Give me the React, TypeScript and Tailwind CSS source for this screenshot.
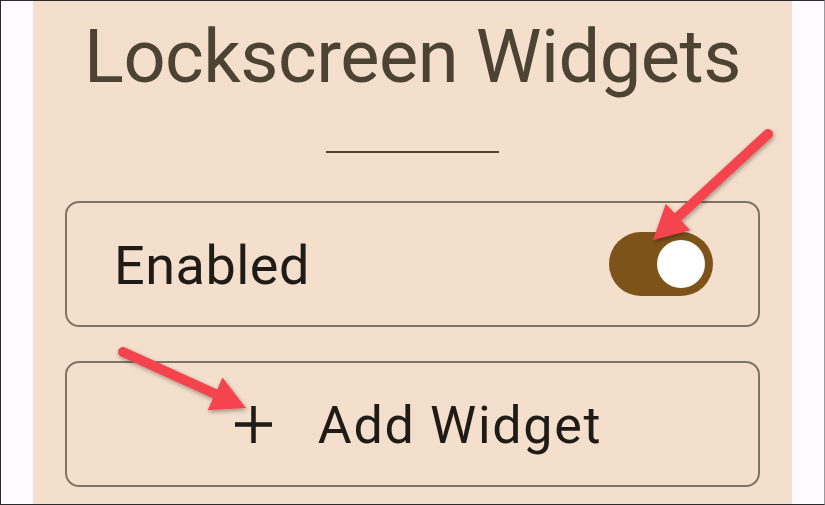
function Arrow({ x1, y1, x2, y2 }: { x1: number; y1: number; x2: number; y2: number }) {
  // shaft from tail to the base of the head, head as a triangle
  const dx = x2 - x1;
  const dy = y2 - y1;
  const len = Math.hypot(dx, dy);
  const ux = dx / len;
  const uy = dy / len;
  const headLen = 34;
  const half = 18;
  const bx = x2 - ux * headLen;
  const by = y2 - uy * headLen;
  const p1 = `${bx - uy * half},${by + ux * half}`;
  const p2 = `${bx + uy * half},${by - ux * half}`;
  return (
    <g filter="url(#arrowShadow)">
      <line
        x1={x1}
        y1={y1}
        x2={bx + ux * 4}
        y2={by + uy * 4}
        stroke="#f44450"
        strokeWidth={10}
        strokeLinecap="round"
      />
      <polygon points={`${x2},${y2} ${p1} ${p2}`} fill="#f44450" strokeLinejoin="round" />
    </g>
  );
}

function Toggle() {
  return (
    <div className="flex h-[64px] w-[104px] items-center justify-end rounded-full bg-[#7e5319] pr-[8px]">
      <div className="h-[48px] w-[48px] rounded-full bg-white" />
    </div>
  );
}

function PlusIcon() {
  return (
    <svg width={37} height={37} viewBox="0 0 37 37" className="shrink-0">
      <path d="M18.5 0 V37 M0 18.5 H37" stroke="#1f1b16" strokeWidth={4.5} />
    </svg>
  );
}

export default function App() {
  return (
    <div
      className="relative flex h-[505px] w-[825px] overflow-hidden border border-[#2a2a2a] border-r-[#9a9a9a] bg-[#fdfbff]"
      style={{ fontFamily: 'Roboto, "Liberation Sans", sans-serif' }}
    >
      <div className="w-[32px] shrink-0" />
      <main className="flex w-[759px] shrink-0 flex-col items-center bg-[#f3dfcb] px-8 pt-[19px]">
        <h1 className="text-[74px] leading-[74px] tracking-[-0.5px] text-[#4d4333]">Lockscreen Widgets</h1>
        <div className="mt-[57px] h-[2px] w-[173px] bg-[#4d4333]" />

        <div className="mt-[48px] flex h-[126px] w-full items-center justify-between rounded-[14px] border-2 border-[#7f7464] pl-[47px] pr-[45px]">
          <span className="mt-[4px] text-[54px] leading-none tracking-[0.5px] text-[#1f1b16]">Enabled</span>
          <Toggle />
        </div>

        <button className="mt-[34px] flex h-[126px] w-full items-center justify-center gap-[46px] rounded-[14px] border-2 border-[#7f7464] pl-[12px] text-[#1f1b16]">
          <PlusIcon />
          <span className="mt-[4px] text-[52px] leading-none tracking-[1.7px]">Add Widget</span>
        </button>
      </main>

      <svg
        className="pointer-events-none absolute left-0 top-0"
        width={825}
        height={505}
        viewBox="0 0 825 505"
      >
        <defs>
          <filter id="arrowShadow" x="-20%" y="-20%" width="140%" height="140%">
            <feDropShadow dx="1" dy="2" stdDeviation="2" floodColor="#000" floodOpacity="0.35" />
          </filter>
        </defs>
        <Arrow x1={767} y1={133} x2={652} y2={239} />
        <Arrow x1={122} y1={351} x2={245} y2={407} />
      </svg>
    </div>
  );
}
